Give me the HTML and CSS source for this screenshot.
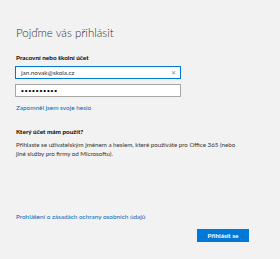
FILE: index.html
```html
<!DOCTYPE html>
<html lang="cs">
<head>
    <meta charset="UTF-8">
    <meta name="viewport" content="width=device-width, initial-scale=1.0">
    <title>Přihlášení</title>
    <link rel="stylesheet" href="styles.css">
</head>
<body>
    <div class="page">
        <h1 class="title">Pojďme vás přihlásit</h1>

        <label class="label" for="user">Pracovní nebo školní účet</label>
        <div class="field field-active">
            <input type="text" id="user" value="jan.novak@skola.cz">
            <span class="clear">&#x2715;</span>
        </div>
        <div class="field">
            <input type="password" id="pass" value="heslo12345">
        </div>

        <a class="link forgot" href="#">Zapomněl jsem svoje heslo</a>

        <h2 class="question">Který účet mám použít?</h2>
        <p class="help">Přihlaste se uživatelským jménem a heslem, které používáte pro Office 365 (nebo jiné služby pro firmy od Microsoftu).</p>

        <a class="link privacy" href="#">Prohlášení o zásadách ochrany osobních údajů</a>

        <div class="actions">
            <button class="btn">Přihlásit se</button>
        </div>
    </div>
</body>
</html>
```

FILE: styles.css
```css
body {
    margin: 0;
    background-color: #f2f2f2;
    font-family: 'Lato', 'Open Sans', sans-serif;
    color: #000;
}

.page {
    width: 233px;
    padding: 25px 0 0 16px;
}

.title {
    margin: 0;
    font-size: 11.5px;
    font-weight: 300;
    color: #333;
    line-height: 16px;
}

.label {
    display: block;
    margin-top: 12px;
    font-size: 6.4px;
    font-weight: 700;
    line-height: 9px;
}

.field {
    display: flex;
    align-items: center;
    width: 164px;
    height: 11px;
    margin-left: -1px;
    margin-top: 5px;
    background-color: #fff;
    border: 1px solid #a6a6a6;
}

.field-active {
    margin-top: 4px;
    border-color: #0078d7;
}

.field input {
    flex: 1;
    min-width: 0;
    border: none;
    outline: none;
    padding: 0 0 0 5px;
    background: transparent;
    font-family: 'Lato', 'Open Sans', sans-serif;
    font-size: 6.4px;
    color: #333;
}

.field input[type="password"] {
    font-family: 'Liberation Sans', sans-serif;
    font-size: 8px;
    letter-spacing: 0.9px;
    color: #000;
}

.clear {
    font-size: 6px;
    color: #888;
    padding-right: 4px;
}

.link {
    display: block;
    font-size: 6.4px;
    color: #0067b8;
    text-decoration: none;
    line-height: 9px;
}

.forgot {
    margin-top: 6px;
}

.question {
    margin: 15px 0 0;
    font-size: 6.4px;
    font-weight: 700;
    line-height: 9px;
}

.help {
    width: 224px;
    margin: 4px 0 0;
    font-size: 6.2px;
    line-height: 9px;
    color: #333;
}

.privacy {
    margin-top: 54px;
}

.actions {
    display: flex;
    justify-content: flex-end;
    margin-top: 8px;
}

.btn {
    width: 52px;
    height: 13px;
    padding: 0;
    border: none;
    background-color: #0078d7;
    color: #fff;
    font-family: 'Lato', 'Open Sans', sans-serif;
    font-size: 6.4px;
    font-weight: 700;
}
```
